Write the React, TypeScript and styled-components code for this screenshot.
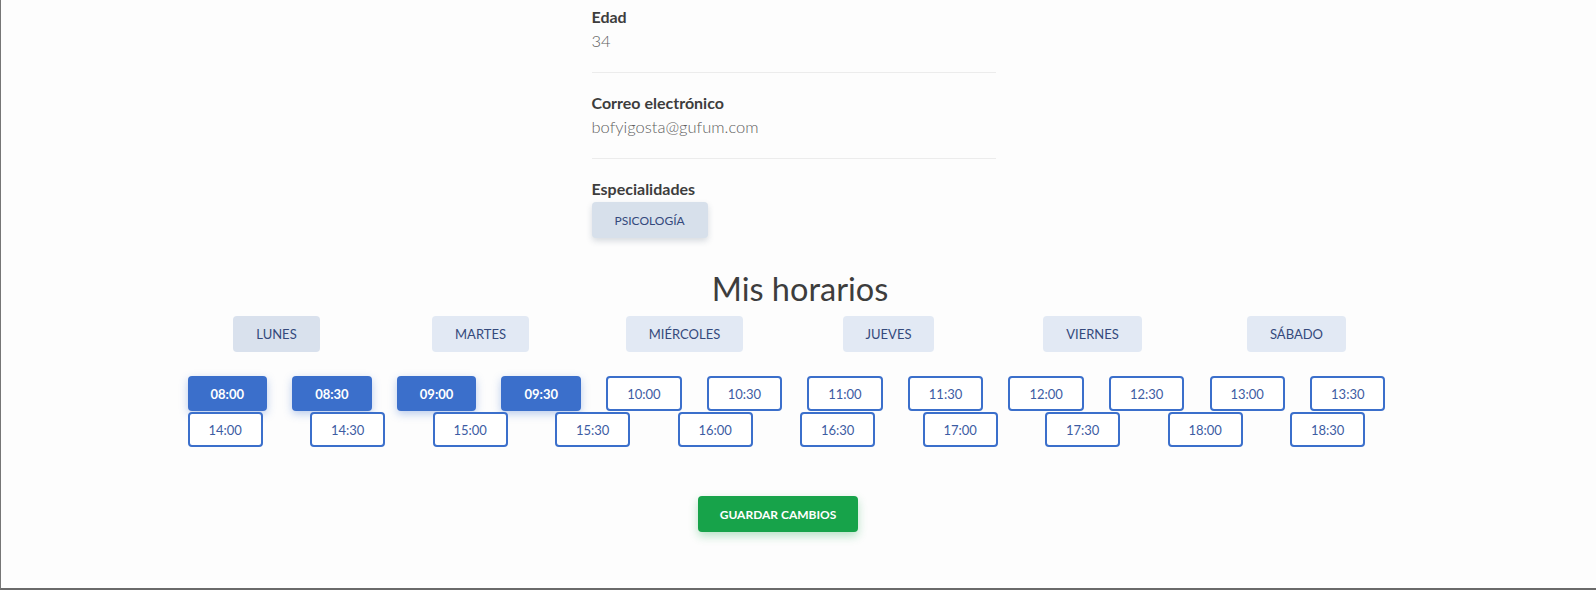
import React, { useState } from 'react';
import styled, { createGlobalStyle } from 'styled-components';

const GlobalStyle = createGlobalStyle`
  html, body {
    margin: 0;
    padding: 0;
    height: 100%;
    overflow: hidden;
    background: #fdfdfd;
  }
  body {
    font-family: Lato, 'Open Sans', sans-serif;
  }
  * {
    box-sizing: border-box;
  }
`;

const Page = styled.div`
  height: 100vh;
  border-left: 1px solid #767676;
  border-bottom: 2px solid #6a6a6a;
  background: #fdfdfd;
  overflow: hidden;
`;

// datos del perfil (la parte de arriba queda fuera del scroll)
const ProfileList = styled.div`
  width: 404px;
  margin: -13px 0 0 calc(50% - 207px);
`;

const Field = styled.div`
  padding: 18px 0 19px;
  border-bottom: 1px solid #ececec;

  &:last-child {
    border-bottom: none;
    padding-bottom: 0;
  }
`;

const Label = styled.div`
  font-size: 16px;
  font-weight: 700;
  line-height: 24px;
  color: #3d3d3d;
`;

const Value = styled.div`
  font-size: 16.5px;
  font-weight: 300;
  line-height: 24px;
  color: #5f5f5f;
`;

const Badge = styled.span`
  display: inline-flex;
  align-items: center;
  height: 36px;
  margin-top: 1px;
  padding: 0 23px;
  background: #d7e0eb;
  color: #34497c;
  font-size: 12px;
  text-transform: uppercase;
  border-radius: 4px;
  box-shadow: 0 3px 6px rgba(40, 60, 90, 0.18);
`;

const Title = styled.h2`
  margin: 30px 0 0;
  padding-left: 3px;
  text-align: center;
  font-size: 32.5px;
  font-weight: 400;
  line-height: 41px;
  color: #3d3d3d;
`;

const Schedule = styled.div`
  width: 1224px;
  margin-left: calc(50% - 624px);
`;

const DayGrid = styled.div`
  margin-top: 7px;
  display: grid;
  grid-template-columns: repeat(6, 1fr);
  justify-items: center;
`;

const DayButton = styled.button<{ $active: boolean }>`
  height: 36px;
  padding: 0 23px;
  border: none;
  border-radius: 4px;
  background: ${p => (p.$active ? '#d9e1ed' : '#e2e9f4')};
  color: #34497c;
  font-family: inherit;
  font-size: 13px;
  text-transform: uppercase;
  cursor: pointer;
`;

const Slots = styled.div`
  margin-top: 24px;
  display: flex;
  flex-direction: column;
  gap: 1px;
`;

const SlotRow = styled.div<{ $last?: boolean }>`
  display: flex;
  justify-content: space-between;
  padding: 0 ${p => (p.$last ? 33 : 13)}px 0 13px;
`;

const Slot = styled.button<{ $selected: boolean }>`
  height: 35px;
  padding: 0 ${p => (p.$selected ? 23 : 19)}px;
  border: ${p => (p.$selected ? 'none' : '2px solid #3b6fcb')};
  border-radius: 4px;
  background: ${p => (p.$selected ? '#3b6fcb' : '#ffffff')};
  color: ${p => (p.$selected ? '#ffffff' : '#3d5ca3')};
  font-family: inherit;
  font-size: 13px;
  font-weight: ${p => (p.$selected ? 700 : 400)};
  box-shadow: ${p => (p.$selected ? '0 3px 8px rgba(59, 111, 203, 0.35)' : 'none')};
  cursor: pointer;
`;

const Footer = styled.div`
  margin-top: 49px;
  display: flex;
  justify-content: center;
  padding-right: 41px;
`;

const SaveButton = styled.button`
  height: 36px;
  padding: 0 22px;
  border: none;
  border-radius: 4px;
  background: #17a34a;
  color: #ffffff;
  font-family: inherit;
  font-size: 12px;
  font-weight: 700;
  text-transform: uppercase;
  box-shadow: 0 4px 10px rgba(23, 163, 74, 0.3);
  cursor: pointer;
`;

const DAYS = ['Lunes', 'Martes', 'Miércoles', 'Jueves', 'Viernes', 'Sábado'];

const SLOTS: string[] = [];
for (let h = 8; h <= 18; h++) {
  const hh = String(h).padStart(2, '0');
  SLOTS.push(`${hh}:00`, `${hh}:30`);
}

export default function App() {
  const [day, setDay] = useState('Lunes');
  const [selected, setSelected] = useState<string[]>(['08:00', '08:30', '09:00', '09:30']);

  const toggle = (s: string) => {
    setSelected(prev => (prev.includes(s) ? prev.filter(x => x !== s) : [...prev, s]));
  };

  const renderRow = (items: string[], last?: boolean) => (
    <SlotRow $last={last}>
      {items.map(s => (
        <Slot key={s} $selected={selected.includes(s)} onClick={() => toggle(s)}>
          {s}
        </Slot>
      ))}
    </SlotRow>
  );

  return (
    <Page>
      <GlobalStyle />
      <ProfileList>
        <Field>
          <Label>Edad</Label>
          <Value>34</Value>
        </Field>
        <Field>
          <Label>Correo electrónico</Label>
          <Value>bofyigosta@gufum.com</Value>
        </Field>
        <Field>
          <Label>Especialidades</Label>
          <Badge>Psicología</Badge>
        </Field>
      </ProfileList>

      <Title>Mis horarios</Title>

      <Schedule>
        <DayGrid>
          {DAYS.map(d => (
            <DayButton key={d} $active={d === day} onClick={() => setDay(d)}>
              {d}
            </DayButton>
          ))}
        </DayGrid>

        <Slots>
          {renderRow(SLOTS.slice(0, 12))}
          {renderRow(SLOTS.slice(12), true)}
        </Slots>
      </Schedule>

      <Footer>
        <SaveButton>Guardar cambios</SaveButton>
      </Footer>
    </Page>
  );
}
